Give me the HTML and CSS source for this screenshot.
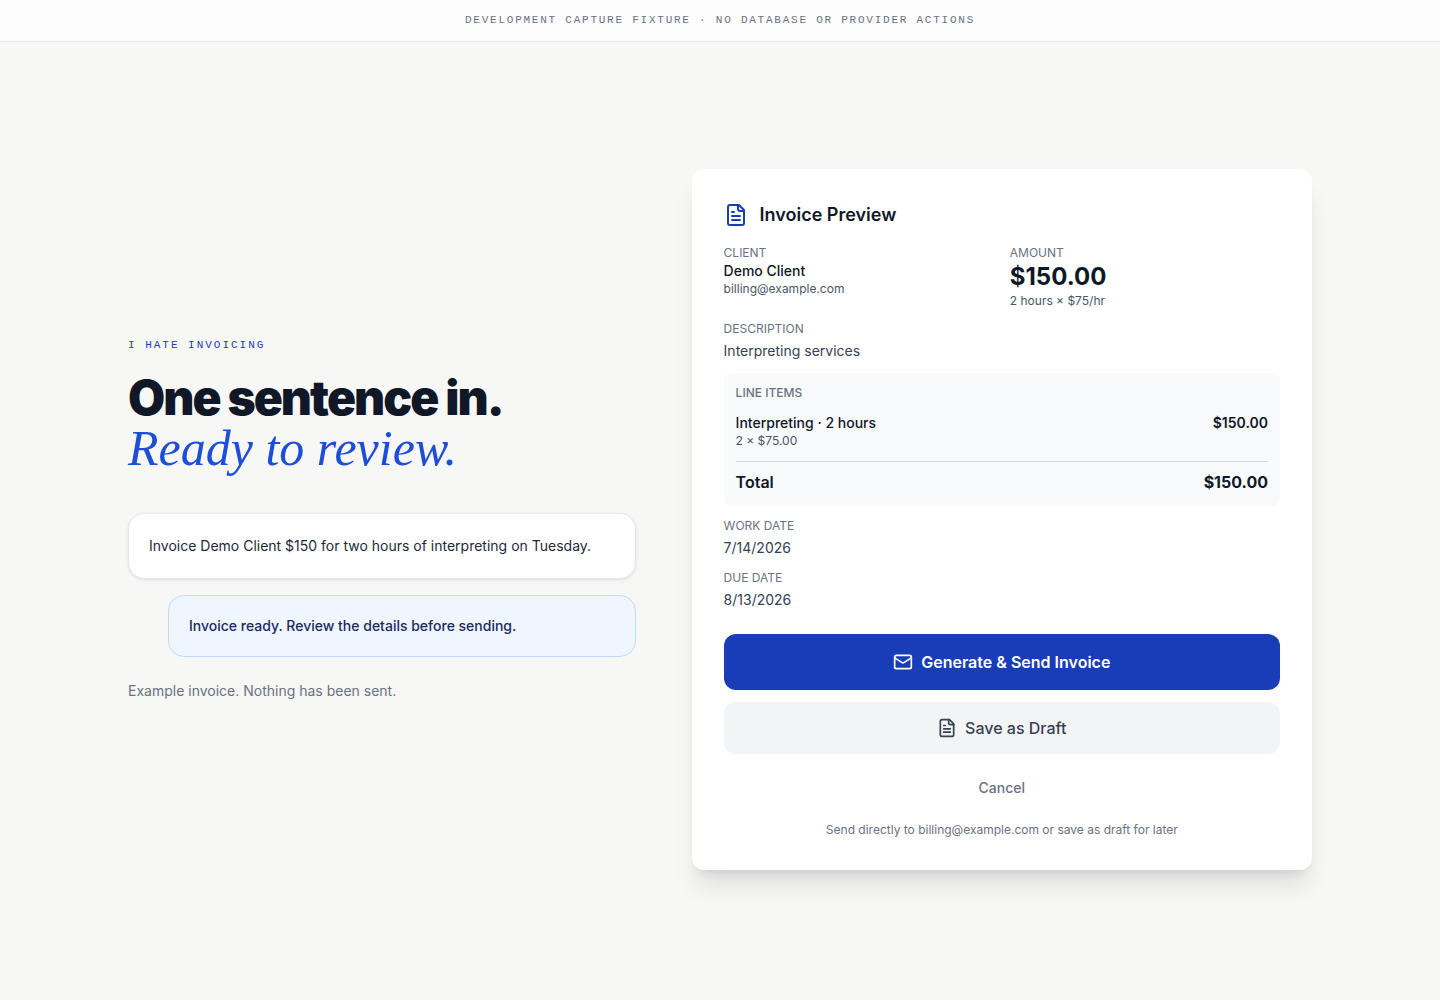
FILE: index.html
```
<!DOCTYPE html>
<html lang="en">
<head>
    <meta charset="UTF-8">
    <meta name="viewport" content="width=device-width, initial-scale=1.0">
    <title>Invoice Preview</title>
    <link rel="stylesheet" href="styles.css">
</head>
<body>
    <header class="topbar">Development capture fixture · No database or provider actions</header>
    <main class="page">
        <!-- left side: intro and conversation -->
        <section class="intro">
            <p class="eyebrow">I hate invoicing</p>
            <h1 class="title">One sentence in. <em>Ready to review.</em></h1>
            <p class="bubble">Invoice Demo Client $150 for two hours of interpreting on Tuesday.</p>
            <p class="bubble reply">Invoice ready. Review the details before sending.</p>
            <p class="note">Example invoice. Nothing has been sent.</p>
        </section>

        <!-- right side: invoice card -->
        <section class="card">
            <div class="card-head">
                <svg class="icon icon-lg" viewBox="0 0 24 24">
                    <path d="M15 2H6a2 2 0 0 0-2 2v16a2 2 0 0 0 2 2h12a2 2 0 0 0 2-2V7Z"/>
                    <path d="M14 2v4a2 2 0 0 0 2 2h4"/>
                    <path d="M10 9H8"/>
                    <path d="M16 13H8"/>
                    <path d="M16 17H8"/>
                </svg>
                <h2>Invoice Preview</h2>
            </div>
            <div class="details">
                <div class="row">
                    <div>
                        <p class="label">Client</p>
                        <p class="name">Demo Client</p>
                        <p class="small">billing@example.com</p>
                    </div>
                    <div>
                        <p class="label">Amount</p>
                        <p class="amount">$150.00</p>
                        <p class="small">2 hours × $75/hr</p>
                    </div>
                </div>
                <div>
                    <p class="label">Description</p>
                    <p class="value">Interpreting services</p>
                </div>
                <div class="items">
                    <p class="label items-label">Line items</p>
                    <div class="item">
                        <div>
                            <p class="name">Interpreting · 2 hours</p>
                            <p class="small">2 × $75.00</p>
                        </div>
                        <p class="price">$150.00</p>
                    </div>
                    <div class="total">
                        <span>Total</span>
                        <span class="total-price">$150.00</span>
                    </div>
                </div>
                <div>
                    <p class="label">Work date</p>
                    <p class="value">7/14/2026</p>
                </div>
                <div>
                    <p class="label">Due date</p>
                    <p class="value">8/13/2026</p>
                </div>
            </div>
            <div class="actions">
                <button type="button" class="btn btn-send">
                    <svg class="icon" viewBox="0 0 24 24">
                        <rect x="2" y="4" width="20" height="16" rx="2"/>
                        <path d="m22 7-8.97 5.7a1.94 1.94 0 0 1-2.06 0L2 7"/>
                    </svg>
                    Generate &amp; Send Invoice
                </button>
                <button type="button" class="btn btn-draft">
                    <svg class="icon" viewBox="0 0 24 24">
                        <path d="M15 2H6a2 2 0 0 0-2 2v16a2 2 0 0 0 2 2h12a2 2 0 0 0 2-2V7Z"/>
                        <path d="M14 2v4a2 2 0 0 0 2 2h4"/>
                        <path d="M10 9H8"/>
                        <path d="M16 13H8"/>
                        <path d="M16 17H8"/>
                    </svg>
                    Save as Draft
                </button>
                <button type="button" class="btn btn-cancel">Cancel</button>
                <p class="hint">Send directly to billing@example.com or save as draft for later</p>
            </div>
        </section>
    </main>
</body>
</html>
```
FILE: styles.css
```
*{
    box-sizing: border-box;
    margin: 0;
    padding: 0;
}

body{
    min-height: 100vh;
    background-color: #f7f7f5;
    color: #101828;
    font-family: Inter, "Liberation Sans", sans-serif;
    font-size: 14px;
    line-height: 20px;
}

.topbar{
    padding: 12px 24px;
    border-bottom: 1px solid #e5e7eb;
    background-color: #fdfdfd;
    color: #6a7282;
    font-family: "Liberation Mono", monospace;
    font-size: 11px;
    line-height: 17px;
    letter-spacing: 0.16em;
    text-align: center;
    text-transform: uppercase;
}

.page{
    display: grid;
    grid-template-columns: 9fr 11fr;
    align-items: center;
    gap: 56px;
    max-width: 1280px;
    min-height: calc(100vh - 45px);
    margin: 0 auto;
    padding: 40px 48px;
}

/* intro */
.intro{
    padding-bottom: 2px;
}

.eyebrow{
    margin-bottom: 20px;
    color: #193cb8;
    font-family: "Liberation Mono", monospace;
    font-size: 11px;
    line-height: 16px;
    letter-spacing: 0.18em;
    text-transform: uppercase;
}

.title{
    margin-bottom: 40px;
    font-size: 48px;
    font-weight: 900;
    line-height: 50px;
    letter-spacing: -0.04em;
}

.title em{
    display: block;
    color: #1d4ed8;
    font-family: "Liberation Serif", serif;
    font-size: 50px;
    font-weight: 400;
    letter-spacing: normal;
}

.bubble{
    padding: 20px;
    border: 1px solid #e5e7eb;
    border-radius: 16px;
    background-color: #fff;
    box-shadow: 0 1px 3px rgba(0,0,0,0.1);
    color: #1e2939;
    line-height: 24px;
}

.reply{
    margin: 16px 0 24px 40px;
    border-color: #bedbff;
    background-color: #eff6ff;
    box-shadow: none;
    color: #1c2a5c;
    font-weight: 500;
    line-height: 20px;
}

.note{
    color: #6a7282;
}

/* card */
.card{
    padding: 32px;
    border-radius: 12px;
    background-color: #fff;
    box-shadow: 0 20px 25px -5px rgba(0,0,0,0.1), 0 8px 10px -6px rgba(0,0,0,0.1);
}

.card-head{
    display: flex;
    align-items: center;
    gap: 12px;
    margin-bottom: 16px;
}

.card-head h2{
    font-size: 18px;
    font-weight: 600;
    line-height: 28px;
}

.icon{
    width: 20px;
    height: 20px;
    flex-shrink: 0;
    fill: none;
    stroke: currentColor;
    stroke-width: 2;
    stroke-linecap: round;
    stroke-linejoin: round;
}

.icon-lg{
    width: 24px;
    height: 24px;
    color: #193cb8;
}

.details{
    display: grid;
    gap: 12px;
}

.row{
    display: grid;
    grid-template-columns: 1fr 1fr;
    gap: 16px;
}

.label{
    color: #6a7282;
    font-size: 12px;
    line-height: 16px;
    text-transform: uppercase;
}

.name{
    font-weight: 500;
}

.small{
    color: #4a5565;
    font-size: 12px;
    line-height: 16px;
}

.amount{
    font-size: 24px;
    font-weight: 700;
    line-height: 32px;
}

.value{
    margin-top: 4px;
    color: #364153;
}

.items{
    padding: 12px;
    border-radius: 8px;
    background-color: #f9fafb;
}

.items-label{
    margin-bottom: 12px;
    font-weight: 500;
}

.item{
    display: flex;
    justify-content: space-between;
}

.price{
    font-weight: 600;
}

.total{
    display: flex;
    justify-content: space-between;
    margin-top: 12px;
    padding-top: 8px;
    border-top: 1px solid #d1d5dc;
    font-size: 16px;
    font-weight: 600;
    line-height: 24px;
}

.total-price{
    font-weight: 700;
}

/* buttons */
.actions{
    display: flex;
    flex-direction: column;
    gap: 12px;
    margin-top: 24px;
}

.btn{
    display: flex;
    align-items: center;
    justify-content: center;
    gap: 8px;
    padding: 14px 24px;
    border: none;
    border-radius: 12px;
    font-family: inherit;
    font-size: 16px;
    font-weight: 500;
    line-height: 24px;
    cursor: pointer;
}

.btn-send{
    padding: 16px 24px;
    background-color: #193cb8;
    color: #fff;
    font-weight: 600;
}

.btn-draft{
    background-color: #f3f4f6;
    color: #364153;
}

.btn-cancel{
    padding: 12px 24px;
    background-color: transparent;
    color: #6a7282;
    font-size: 14px;
    line-height: 20px;
}

.hint{
    color: #6a7282;
    font-size: 12px;
    line-height: 16px;
    text-align: center;
}
```
